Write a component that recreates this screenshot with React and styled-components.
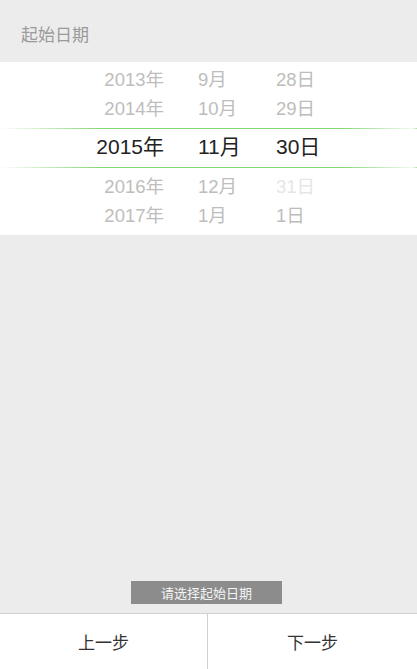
import React from "react";
import styled, { createGlobalStyle } from "styled-components";

const Global = createGlobalStyle`
  html, body, #root { height: 100%; margin: 0; padding: 0; }
  body {
    font-family: "Liberation Sans", "Noto Sans CJK SC", sans-serif;
    background: #ececec;
  }
`;

const Page = styled.div`
  position: relative;
  height: 100%;
  display: flex;
  flex-direction: column;
  background: #ececec;
`;

const Header = styled.div`
  height: 62px;
  display: flex;
  align-items: center;
  padding-left: 21px;
  padding-top: 5px;
  font-size: 17px;
  color: #9a9a9a;
  box-sizing: border-box;
`;

const Picker = styled.div`
  background: #fff;
  padding: 4px 0 4px;
  display: flex;
  flex-direction: column;
`;

const Row = styled.div`
  display: grid;
  grid-template-columns: 164px 112px 1fr;
  align-items: center;
  box-sizing: border-box;
  line-height: 1;
  height: ${(p) => (p.$selected ? "38px" : "29px")};
  padding-bottom: ${(p) => (p.$selected ? "3px" : "0")};
  font-size: ${(p) => (p.$selected ? "21px" : "18.5px")};
  color: ${(p) => (p.$selected ? "#222" : "#bdbdbd")};
`;

const Line = styled.div`
  height: 1px;
  margin: ${(p) => p.$margin};
  background: linear-gradient(
    90deg,
    rgba(126, 214, 110, 0) 0%,
    #86d876 24%,
    #86d876 82%,
    rgba(126, 214, 110, 0.1) 99%,
    #a6e29a 100%
  );
`;

const YearCell = styled.span`
  text-align: right;
`;

const MonthCell = styled.span`
  padding-left: 34px;
`;

const DayCell = styled.span`
  color: ${(p) => (p.$disabled ? "#e6e6e6" : "inherit")};
`;

const Spacer = styled.div`
  flex: 1;
`;

const Toast = styled.div`
  position: absolute;
  left: 131px;
  bottom: 65px;
  width: 151px;
  height: 23px;
  background: #8c8c8c;
  color: #f4f4f4;
  font-size: 13px;
  display: flex;
  align-items: center;
  justify-content: center;
`;

const Footer = styled.div`
  height: 55px;
  background: #fff;
  border-top: 1px solid #d0d0d0;
  display: grid;
  grid-template-columns: 207px 1fr;
`;

const FooterButton = styled.div`
  display: flex;
  align-items: center;
  justify-content: center;
  font-size: 17px;
  color: #333;
  border-left: ${(p) => (p.$divider ? "1px solid #d0d0d0" : "none")};
`;

const rowsAbove = [
  ["2013年", "9月", "28日"],
  ["2014年", "10月", "29日"],
];
const rowsBelow = [
  ["2016年", "12月", "31日", true],
  ["2017年", "1月", "1日"],
];

function PickerRow({ year, month, day, disabled, selected }) {
  return (
    <Row $selected={selected}>
      <YearCell>{year}</YearCell>
      <MonthCell>{month}</MonthCell>
      <DayCell $disabled={disabled}>{day}</DayCell>
    </Row>
  );
}

export default function App() {
  return (
    <>
      <Global />
      <Page>
        <Header>起始日期</Header>
        <Picker>
          {rowsAbove.map(([y, m, d, dis]) => (
            <PickerRow key={y} year={y} month={m} day={d} disabled={dis} />
          ))}
          <Line $margin="4px 0 0" />
          <PickerRow year="2015年" month="11月" day="30日" selected />
          <Line $margin="0 0 5px" />
          {rowsBelow.map(([y, m, d, dis]) => (
            <PickerRow key={y} year={y} month={m} day={d} disabled={dis} />
          ))}
        </Picker>
        <Spacer />
        <Toast>请选择起始日期</Toast>
        <Footer>
          <FooterButton>上一步</FooterButton>
          <FooterButton $divider>下一步</FooterButton>
        </Footer>
      </Page>
    </>
  );
}
